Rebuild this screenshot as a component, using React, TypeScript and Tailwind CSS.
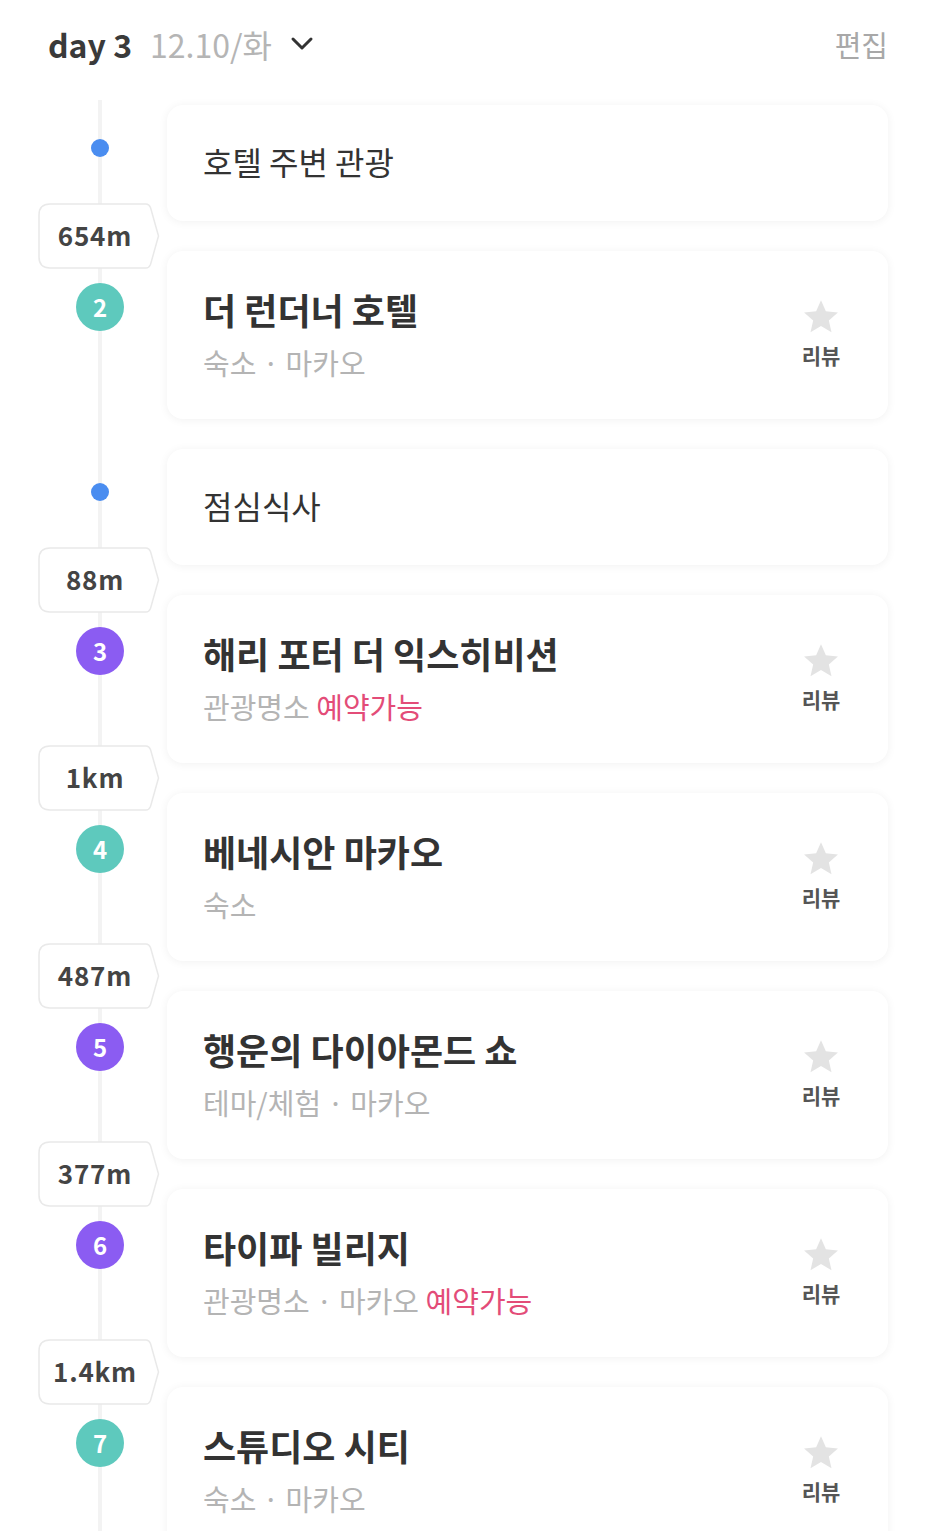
import React from "react";

type Item =
  | { kind: "memo"; text: string; badge?: string }
  | {
      kind: "place";
      num: number;
      color: "teal" | "purple";
      title: string;
      sub: string;
      reserve?: boolean;
      badge?: string;
    };

const items: Item[] = [
  { kind: "memo", text: "호텔 주변 관광", badge: "654m" },
  { kind: "place", num: 2, color: "teal", title: "더 런더너 호텔", sub: "숙소 · 마카오" },
  { kind: "memo", text: "점심식사", badge: "88m" },
  { kind: "place", num: 3, color: "purple", title: "해리 포터 더 익스히비션", sub: "관광명소", reserve: true, badge: "1km" },
  { kind: "place", num: 4, color: "teal", title: "베네시안 마카오", sub: "숙소", badge: "487m" },
  { kind: "place", num: 5, color: "purple", title: "행운의 다이아몬드 쇼", sub: "테마/체험 · 마카오", badge: "377m" },
  { kind: "place", num: 6, color: "purple", title: "타이파 빌리지", sub: "관광명소 · 마카오", reserve: true, badge: "1.4km" },
  { kind: "place", num: 7, color: "teal", title: "스튜디오 시티", sub: "숙소 · 마카오" },
];

const font = { fontFamily: '"Noto Sans CJK KR", "Noto Sans", sans-serif' };

function Badge({ text }: { text: string }) {
  return (
    <div className="relative ml-[38px] w-[122px] h-[66px] shrink-0 z-10">
      <svg className="absolute inset-0" width="122" height="66" viewBox="0 0 122 66">
        <path
          d="M12 1 H108 Q111 1 112.5 4.5 L120.5 33 L112.5 61.5 Q111 65 108 65 H12 Q1 65 1 54 V12 Q1 1 12 1 Z"
          fill="#ffffff"
          stroke="#e9e9e9"
          strokeWidth="1.5"
        />
      </svg>
      <div className="relative w-[114px] h-full flex items-center justify-center pb-[4px] text-[26px] font-bold text-[#444444] tracking-[0.8px]">
        {text}
      </div>
    </div>
  );
}

function Star() {
  return (
    <svg width="38" height="36" viewBox="0 0 24 23">
      <path
        d="M12 0.8 L15.1 7.9 L22.8 8.6 L17 13.7 L18.7 21.3 L12 17.3 L5.3 21.3 L7 13.7 L1.2 8.6 L8.9 7.9 Z"
        fill="#e3e3e3"
      />
    </svg>
  );
}

function Row({ item }: { item: Item }) {
  if (item.kind === "memo") {
    return (
      <div className="flex h-[116px]">
        <div className="w-[167px] shrink-0 relative z-10">
          <div className="mt-[34px] ml-[91px] w-[18px] h-[18px] rounded-full bg-[#4a8df0]" />
        </div>
        <div className="flex-1 mr-[48px] rounded-2xl bg-white shadow-[0_1px_10px_rgba(0,0,0,0.06)] flex items-center pl-[36px] pb-[5px]">
          <span className="text-[32px] text-[#333333] leading-none">{item.text}</span>
        </div>
      </div>
    );
  }
  const circle = item.color === "teal" ? "bg-[#5ec9bd]" : "bg-[#8b5cf2]";
  return (
    <div className="flex h-[168px]">
      <div className="w-[167px] shrink-0 relative z-10">
        <div
          className={`mt-[32px] ml-[76px] w-[48px] h-[48px] rounded-full ${circle} flex items-center justify-center text-white text-[24px] font-bold leading-none`}
        >
          {item.num}
        </div>
      </div>
      <div className="flex-1 mr-[48px] rounded-2xl bg-white shadow-[0_1px_10px_rgba(0,0,0,0.06)] flex">
        <div className="flex-1 pl-[36px] pt-[36px]">
          <div className="text-[36px] font-bold text-[#333333] leading-[44px] whitespace-nowrap">{item.title}</div>
          <div className="mt-[11px] text-[29px] text-[#b4b4b4] leading-[40px] whitespace-nowrap">
            {item.sub}
            {item.reserve && <span className="text-[#e34c78]"> 예약가능</span>}
          </div>
        </div>
        <div className="w-[60px] mr-[37px] flex flex-col items-center pt-[48px]">
          <Star />
          <div className="mt-[6px] text-[21px] font-semibold text-[#555555] leading-[28px]">리뷰</div>
        </div>
      </div>
    </div>
  );
}

export default function App() {
  return (
    <div className="w-[936px] min-h-[1531px] bg-white overflow-hidden" style={font}>
      <div className="h-[88px] flex items-center justify-between pl-[48px] pr-[48px]">
        <div className="flex items-center">
          <span className="text-[32px] font-bold text-[#3a3a3a] leading-none">day 3</span>
          <span className="ml-[18px] text-[32px] text-[#b5b5b5] leading-none">12.10/화</span>
          <svg className="ml-[18px]" width="24" height="16" viewBox="0 0 24 16">
            <path d="M3 3 L12 12 L21 3" fill="none" stroke="#333333" strokeWidth="3" strokeLinecap="round" strokeLinejoin="round" />
          </svg>
        </div>
        <span className="text-[29px] text-[#a8a8a8] leading-none">편집</span>
      </div>
      <div className="relative pt-[17px]">
        <div className="absolute left-[98px] top-[12px] bottom-0 w-[4px] bg-[#f3f3f3]" />
        {items.map((it, i) => (
          <React.Fragment key={i}>
            <Row item={it} />
            {i < items.length - 1 && (
              <div className="h-[30px] flex items-center">
                {it.badge && <Badge text={it.badge} />}
              </div>
            )}
          </React.Fragment>
        ))}
      </div>
    </div>
  );
}
